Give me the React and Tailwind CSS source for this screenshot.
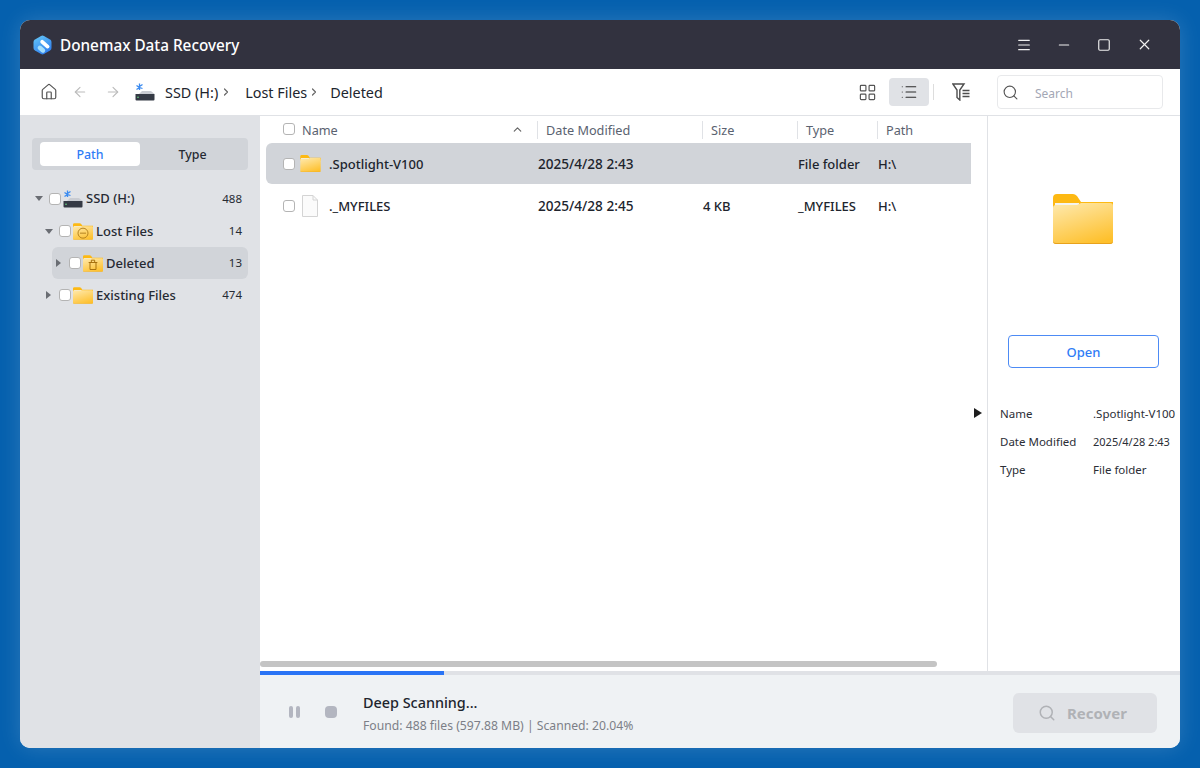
import React from "react";
import {
  Home,
  ArrowLeft,
  ArrowRight,
  ChevronRight,
  ChevronUp,
  LayoutGrid,
  List,
  Search,
  Menu,
  Minus,
  Square,
  X,
} from "lucide-react";

function Logo() {
  return (
    <svg width="19" height="20" viewBox="0 0 19 20">
      <defs>
        <linearGradient id="logoFill" x1="0.2" y1="0" x2="0.8" y2="1">
          <stop offset="0" stopColor="#62c4f8" />
          <stop offset="1" stopColor="#2b78ec" />
        </linearGradient>
      </defs>
      <path
        d="M8 1 Q9.5 .2 11 1 L17 4.5 Q18.5 5.4 18.5 7 V13 Q18.5 14.6 17 15.5 L11 19 Q9.5 19.8 8 19 L2 15.5 Q.5 14.6 .5 13 V7 Q.5 5.4 2 4.5 Z"
        fill="url(#logoFill)"
      />
      <path d="M6.8 12.8 L10 15.5" fill="none" stroke="#a5dffb" strokeWidth="4.4" strokeLinecap="round" />
      <path d="M9.2 6.8 L14.6 11.6" fill="none" stroke="#fff" strokeWidth="3.8" strokeLinecap="round" />
    </svg>
  );
}

function DriveIcon() {
  return (
    <svg width="20" height="18" viewBox="0 0 20 18">
      <path d="M4 11 L7 8 H16 L19.5 11 Z" fill="#c9ccd2" />
      <path d="M.5 11 H19.5 V16.5 Q19.5 17.5 18.5 17.5 H1.5 Q.5 17.5 .5 16.5 Z" fill="#353a45" />
      <circle cx="3" cy="14.3" r=".8" fill="#6fe08a" />
      <path d="M4.5 .5 V7 M1.5 2.5 L4.5 4.5 L1.5 6.5 M7.5 1.5 L4.5 3.5 M7.5 5.5 L4.5 4.5" stroke="#3b8bf0" strokeWidth="1.3" fill="none" />
    </svg>
  );
}

function Folder({ id, width, height, badge }) {
  return (
    <svg width={width} height={height} viewBox="0 0 60 50">
      <defs>
        <linearGradient id={id} x1="0.25" y1="0" x2="0.7" y2="1">
          <stop offset="0" stopColor="#fee6a4" />
          <stop offset="1" stopColor="#fec02c" />
        </linearGradient>
      </defs>
      <path d="M0 4 Q0 0 4 0 H20 Q22 0 24 2 L28 8 H60 V16 H0 Z" fill="#fdb913" />
      <rect x="2" y="9" width="24" height="4" fill="#f4f4f0" />
      <path
        d="M0 14 Q0 11 3 11 L24 11 L28 9 H57 Q60 9 60 12 V47 Q60 50 57 50 H3 Q0 50 0 47 Z"
        fill={`url(#${id})`}
      />
      <path d="M0 46 Q0 49 3 49 H57 Q60 49 60 46 V47 Q60 50 57 50 H3 Q0 50 0 47 Z" fill="#e8a21c" />
      {badge === "lost" && (
        <g fill="none" stroke="#b58320" strokeWidth="3">
          <circle cx="30" cy="30" r="15" />
          <path d="M21 30 H39" />
        </g>
      )}
      {badge === "trash" && (
        <g fill="none" stroke="#a8720f" strokeWidth="3">
          <path d="M17 22 H43 M25 22 V15 H35 V22 M21 22 V43 H39 V22" />
        </g>
      )}
    </svg>
  );
}

function FileIcon() {
  return (
    <svg width="16" height="22" viewBox="0 0 16 22">
      <path d="M.5 .5 H11 L15.5 5 V21.5 H.5 Z" fill="#fbfbfb" stroke="#d4d4d4" />
      <path d="M11 .5 V5 H15.5" fill="none" stroke="#d4d4d4" />
    </svg>
  );
}

function FilterIcon() {
  return (
    <svg width="18" height="18" viewBox="0 0 18 18" fill="none" stroke="#4d4d4d" strokeWidth="1.4">
      <path d="M.8 1 H12 L7.8 7 V17 L5 14.5 V7 Z" />
      <path d="M10.5 7.5 H17.5 M10.5 10.5 H17.5 M10.5 13.5 H17.5" strokeWidth="1.5" />
    </svg>
  );
}

function Check() {
  return <span className="block w-3 h-3 shrink-0 bg-white border border-[#b4b4b4] rounded-[3px]" />;
}

function Caret({ open }) {
  return (
    <span className="w-[14px] shrink-0 flex items-center">
      {open ? (
        <span className="w-0 h-0 border-x-4 border-x-transparent border-t-[5px] border-t-[#6a6d73]" />
      ) : (
        <span className="ml-[1px] w-0 h-0 border-y-4 border-y-transparent border-l-[5px] border-l-[#6a6d73]" />
      )}
    </span>
  );
}

function TreeRow({ open, icon, label, count, className }) {
  return (
    <div className={`flex items-center pl-[3px] pr-1.5 text-[#262a33] ${className}`}>
      <Caret open={open} />
      <Check />
      <span className="ml-0.5 w-5 shrink-0 flex items-center justify-center">{icon}</span>
      <span className="ml-[3px] pt-px text-[13px] font-medium whitespace-nowrap">{label}</span>
      <span className="ml-auto text-[11.5px]">{count}</span>
    </div>
  );
}

const headerCols = "grid grid-cols-[277px_165px_95px_80px_1fr]";
const rowCols = "ml-1.5 w-[705px] grid grid-cols-[272px_165px_95px_80px_1fr] items-center";

function Header({ label, first }) {
  return (
    <div className={`h-[18px] flex items-center ${first ? "pl-[23px]" : "border-l border-[#e0e2e6] pl-2 pt-0.5"}`}>
      {label}
    </div>
  );
}

function FileRow({ selected, icon, name, date, size, type }) {
  return (
    <div className={`${rowCols} text-[13px] font-medium text-[#20242d] ${selected ? "h-[41px] bg-[#d1d4d9] rounded-l-md" : "h-[43px]"}`}>
      <div className="flex items-center pl-[17px]">
        <Check />
        <span className="ml-1 w-[22px] flex justify-center">{icon}</span>
        <span className="ml-2 pt-0.5">{name}</span>
      </div>
      <div className="pt-0.5 text-[13.6px]">{date}</div>
      <div className="pt-0.5">{size}</div>
      <div className="pt-0.5">{type}</div>
      <div className="pt-0.5">H:\</div>
    </div>
  );
}

function Detail({ label, value, valueClass }) {
  return (
    <div className="flex items-center h-7 pl-3 pt-0.5 text-[11.5px] text-[#2b2e36] whitespace-nowrap">
      <span className="w-[93px] shrink-0">{label}</span>
      <span className={valueClass}>{value}</span>
    </div>
  );
}

export default function App() {
  return (
    <div className="h-screen w-screen p-5 bg-[#0560ae] overflow-hidden font-['Noto_Sans',sans-serif]">
      <div className="h-full flex flex-col rounded-[10px] overflow-hidden bg-white shadow-[0_0_22px_rgba(255,255,255,0.16)]">
        <div className="h-[49px] shrink-0 bg-[#32323f] flex items-center pl-[13px] pr-[27px] text-[#f0f0f0]">
          <Logo />
          <span className="ml-2 pt-0.5 text-[15.3px] font-medium text-white">Donemax Data Recovery</span>
          <div className="ml-auto flex items-center gap-6">
            <Menu size={16} strokeWidth={1.7} />
            <Minus size={16} strokeWidth={1.7} />
            <Square size={14} strokeWidth={2} className="mx-px" />
            <X size={17} strokeWidth={1.7} />
          </div>
        </div>

        <div className="h-[47px] shrink-0 flex items-center pl-5 pr-[17px] border-b border-[#e0e2e6] text-[#20242d]">
          <Home size={18} strokeWidth={1.6} className="text-[#555]" />
          <ArrowLeft size={16} strokeWidth={1.7} className="ml-[14px] text-[#bbbbbb]" />
          <ArrowRight size={16} strokeWidth={1.7} className="ml-[17px] text-[#bbbbbb]" />
          <span className="ml-[14px]"><DriveIcon /></span>
          <span className="ml-2.5 pt-0.5 text-[14.4px] whitespace-nowrap">SSD (H:)</span>
          <ChevronRight size={12} strokeWidth={2.4} className="ml-[2px] text-[#666]" />
          <span className="ml-[13px] pt-0.5 text-[14.4px] whitespace-nowrap">Lost Files</span>
          <ChevronRight size={12} strokeWidth={2.4} className="ml-[1px] text-[#666]" />
          <span className="ml-[10px] pt-0.5 text-[14.4px]">Deleted</span>
          <div className="ml-auto flex items-center">
            <LayoutGrid size={19} strokeWidth={1.5} className="text-[#555]" />
            <span className="ml-[12px] w-10 h-7 rounded bg-[#e0e2e6] flex items-center justify-center">
              <List size={18} strokeWidth={1.4} className="text-[#2b2b2b]" />
            </span>
            <span className="ml-1 w-px h-4 bg-[#dddddd]" />
            <span className="ml-[18px]"><FilterIcon /></span>
            <div className="ml-[27px] w-[166px] h-[34px] border border-[#e8e9eb] rounded flex items-center pl-1 text-xs text-[#a3a7b5]">
              <Search size={17} strokeWidth={1.6} className="text-[#555]" />
              <span className="ml-[16px] pt-[3px]">Search</span>
            </div>
          </div>
        </div>

        <div className="flex-1 flex min-h-0">
          <aside className="w-60 shrink-0 bg-[#e0e2e6] px-3 pt-[22px]">
            <div className="h-8 rounded bg-[#d1d4d9] flex items-center px-2 text-[12.4px] font-medium">
              <span className="w-[100px] h-6 pt-[3px] bg-white rounded-sm flex items-center justify-center text-[#2f7cf6]">Path</span>
              <span className="flex-1 pt-[3px] text-center pl-[5px] text-[#262a33]">Type</span>
            </div>
            <div className="mt-3">
              <TreeRow open icon={<DriveIcon />} label="SSD (H:)" count="488" className="h-[33px]" />
              <div className="pl-2.5">
                <TreeRow open icon={<Folder id="f1" width={20} height={17} badge="lost" />} label="Lost Files" count="14" className="h-8" />
              </div>
              <TreeRow icon={<Folder id="f2" width={20} height={17} badge="trash" />} label="Deleted" count="13" className="h-8 ml-5 bg-[#d1d4d9] rounded-md" />
              <div className="pl-2.5">
                <TreeRow icon={<Folder id="f3" width={20} height={17} />} label="Existing Files" count="474" className="h-8" />
              </div>
            </div>
          </aside>

          <div className="flex-1 min-w-0 flex flex-col bg-[#eff2f4]">
            <div className="flex-1 min-h-0 flex bg-white">
              <div className="w-[728px] shrink-0 flex flex-col border-r border-[#e0e2e6]">
                <div className={`${headerCols} h-[27px] shrink-0 items-center text-[12.7px] text-[#5a6270]`}>
                  <div className="flex items-center">
                    <Header first label={<Check />} />
                    <span className="ml-[7px] pt-0.5">Name</span>
                    <ChevronUp size={13} className="ml-auto mr-[13px] text-[#666]" strokeWidth={2.2} />
                  </div>
                  <Header label="Date Modified" />
                  <Header label="Size" />
                  <Header label="Type" />
                  <Header label="Path" />
                </div>
                <div className="flex-1 min-h-0 flex">
                  <div className="w-[711px] shrink-0">
                    <FileRow
                      selected
                      icon={<Folder id="f4" width={21} height={17} />}
                      name=".Spotlight-V100"
                      date="2025/4/28 2:43"
                      size=""
                      type="File folder"
                    />
                    <FileRow
                      icon={<FileIcon />}
                      name="._MYFILES"
                      date="2025/4/28 2:45"
                      size="4 KB"
                      type="_MYFILES"
                    />
                  </div>
                  <div className="pl-[3px] pt-[265px]">
                    <span className="block w-0 h-0 border-y-[5.5px] border-y-transparent border-l-[8px] border-l-[#1e1e1e]" />
                  </div>
                </div>
                <div className="h-1.5 w-[677px] shrink-0 mb-1 rounded-full bg-[#c4c4c4]" />
              </div>
              <div className="flex-1 min-w-0 overflow-hidden flex flex-col items-stretch pt-[78px]">
                <div className="flex justify-center pr-[2px]">
                  <Folder id="f5" width={60} height={50} />
                </div>
                <button className="mt-[91px] ml-5 w-[151px] h-[33px] pt-0.5 shrink-0 bg-white border border-[#4d8bf5] rounded text-[13px] font-medium text-[#2f7cf6]">
                  Open
                </button>
                <div className="mt-[31px]">
                  <Detail label="Name" value=".Spotlight-V100" />
                  <Detail label="Date Modified" value="2025/4/28 2:43" valueClass="text-[11px]" />
                  <Detail label="Type" value="File folder" />
                </div>
              </div>
            </div>

            <div className="h-1 shrink-0 bg-[#e0e2e6]">
              <div className="h-full w-[184px] bg-[#2a74f5]" />
            </div>
            <div className="h-[73px] shrink-0 flex items-center pl-[29px] pr-[23px] pt-0.5">
              <span className="flex gap-[3px] mb-0.5">
                <span className="w-1 h-3 rounded-sm bg-[#b3b6c0]" />
                <span className="w-1 h-3 rounded-sm bg-[#b3b6c0]" />
              </span>
              <span className="ml-[25px] mb-0.5 w-3 h-3 rounded-sm bg-[#b3b6c0]" />
              <div className="ml-[26px] pt-0.5">
                <div className="text-[14.4px] font-medium text-[#20242d]">Deep Scanning...</div>
                <div className="mt-[3px] text-[12.2px] text-[#7c7f87]">Found: 488 files (597.88 MB) | Scanned: 20.04%</div>
              </div>
              <div className="ml-auto w-36 h-10 rounded-md bg-[#e0e2e6] flex items-center pl-[25px] text-[15px] font-bold text-[#b0b2b6]">
                <Search size={18} strokeWidth={2} />
                <span className="ml-[11px] pt-0.5">Recover</span>
              </div>
            </div>
          </div>
        </div>
      </div>
    </div>
  );
}
